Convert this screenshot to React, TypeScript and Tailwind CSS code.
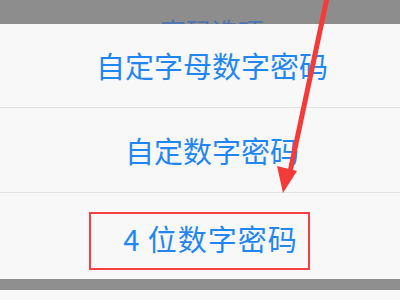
export default function App() {
  const font = { fontFamily: '"Noto Sans CJK SC", "Noto Sans", sans-serif' };
  return (
    <div className="relative w-[400px] h-[300px] overflow-hidden bg-[#f8f8f8]" style={font}>
      {/* dimmed header with cut-off title */}
      <div className="h-[24px] bg-[#8d8d8d] overflow-hidden flex items-end justify-center pl-[24px]">
        <span className="text-[26px] leading-none text-[#3d6fb8] mb-[-20px] opacity-80">密码选项</span>
      </div>

      <div className="flex flex-col bg-[#f8f8f8]">
        <div className="h-[84px] flex items-center justify-center pl-[24px] border-b border-[#e2e2e2]">
          <span className="text-[29px] leading-none text-[#1f86f4]">自定字母数字密码</span>
        </div>
        <div className="h-[85px] flex items-center justify-center pl-[24px] border-b border-[#e2e2e2]">
          <span className="text-[29px] leading-none text-[#1f86f4]">自定数字密码</span>
        </div>
        <div className="h-[86px] flex items-center justify-center">
          <div className="w-[221px] h-[58px] mt-[10px] ml-[-1px] border-2 border-[#f43f46] flex items-center justify-center pl-[22px]">
            <span className="text-[29px] leading-none tracking-[1px] text-[#1f86f4] mt-[-6px]">4 位数字密码</span>
          </div>
        </div>
      </div>

      <div className="h-[11px] bg-[#8f8f8f]" />
      <div className="h-[10px] bg-[#f8f8f8]" />

      {/* red annotation arrow */}
      <svg className="absolute left-0 top-0" width="400" height="300" viewBox="0 0 400 300">
        <line x1="327" y1="-2" x2="290" y2="172" stroke="#f53a3a" strokeWidth="5" strokeLinecap="round" />
        <polygon points="277,166 297,171 283,193" fill="#f53a3a" />
      </svg>
    </div>
  );
}
